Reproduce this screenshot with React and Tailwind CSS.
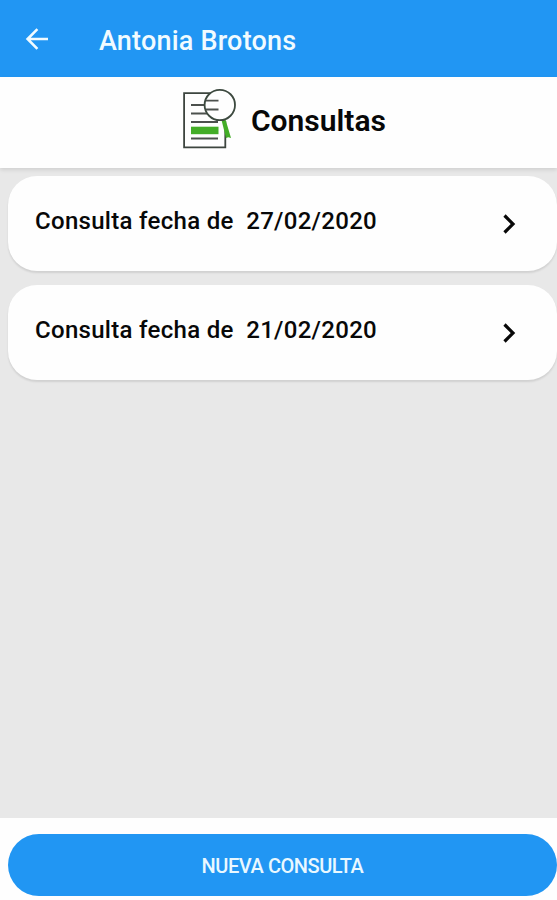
const consultas = ["27/02/2020", "21/02/2020"];

function BackArrow() {
  return (
    <svg className="h-[24px] w-[24px] shrink-0" viewBox="0 0 24 24" fill="none" stroke="#f1fbff" strokeWidth="2.6">
      <path d="M24 12H4M13.400 2.200L3.600 12l9.800 9.800" />
    </svg>
  );
}

function DocumentIcon() {
  return (
    <svg className="h-[64px] w-[56px] shrink-0" viewBox="0 0 56 64" fill="none">
      <path d="M35 5.200H4.100v54.200h41.200V33" stroke="#3d453f" strokeWidth="1.8" />
      <path d="M11 17h14M11 25.500h16M11 34h27M11 50.500h27" stroke="#4c504d" strokeWidth="1.8" />
      <path d="M11 38.700h27.500v7.500H11z" fill="#43ad27" />
      <path d="M41.500 32l4-.5 5.500 18.500-2.700-.8-2.300.800z" fill="#43ad27" />
      <circle cx="39.800" cy="17" r="15.200" fill="#fefefe" stroke="#3c493f" strokeWidth="1.800" />
      <path d="M26 12.700h12.500M26 21.500h12.500" stroke="#4c504d" strokeWidth="1.800" />
    </svg>
  );
}

function Consulta({ fecha }) {
  return (
    <button className="flex h-[95px] w-[549px] shrink-0 items-center justify-between rounded-[29px] bg-[#fefefe] pl-[27px] pr-[40px] text-left shadow-[0_2px_2px_rgba(0,0,0,0.1)]">
      <span className="-mt-[6px] whitespace-pre text-[24px] font-medium leading-[30px] tracking-[0.3px] text-[#080808]">
        {"Consulta fecha de  "}{fecha}
      </span>
      <svg className="h-[20px] w-[16px]" viewBox="0 0 16 20" fill="none" stroke="#080808" strokeWidth="3.200">
        <path d="M3.500 1.500L12 10l-8.500 8.500" />
      </svg>
    </button>
  );
}

export default function App() {
  return (
    <div className="flex h-[900px] w-[557px] flex-col overflow-hidden bg-[#e8e8e8] font-['Roboto','Liberation_Sans',sans-serif]">
      <header className="flex h-[77px] shrink-0 items-center bg-[#2196f3] pl-[24px]">
        <BackArrow />
        <h1 className="ml-[51px] mt-[4px] whitespace-nowrap text-[27px] font-medium leading-[32px] tracking-[0.2px] text-[#f1fbff]">Antonia Brotons</h1>
      </header>
      <section className="flex h-[91px] shrink-0 items-start bg-[#fefefe] pl-[180px] pt-[11px] shadow-[0_2px_4px_rgba(0,0,0,0.1)]">
        <DocumentIcon />
        <h2 className="ml-[15px] mt-[15px] whitespace-nowrap text-[30px] font-semibold leading-[36px] text-[#080808]">Consultas</h2>
      </section>
      <main className="flex flex-1 flex-col gap-[14px] pl-[8px] pt-[8px]">
        {consultas.map((fecha) => <Consulta key={fecha} fecha={fecha} />)}
      </main>
      <footer className="h-[82px] shrink-0 bg-[#fefefe] pl-[8px] pt-[16px]">
        <button className="flex h-[62px] w-[549px] items-center justify-center rounded-full bg-[#2196f3] text-[20px] font-medium tracking-[-0.45px] text-[#e9f8ff]">
          <span className="mt-[2px]">NUEVA CONSULTA</span>
        </button>
      </footer>
    </div>
  );
}
